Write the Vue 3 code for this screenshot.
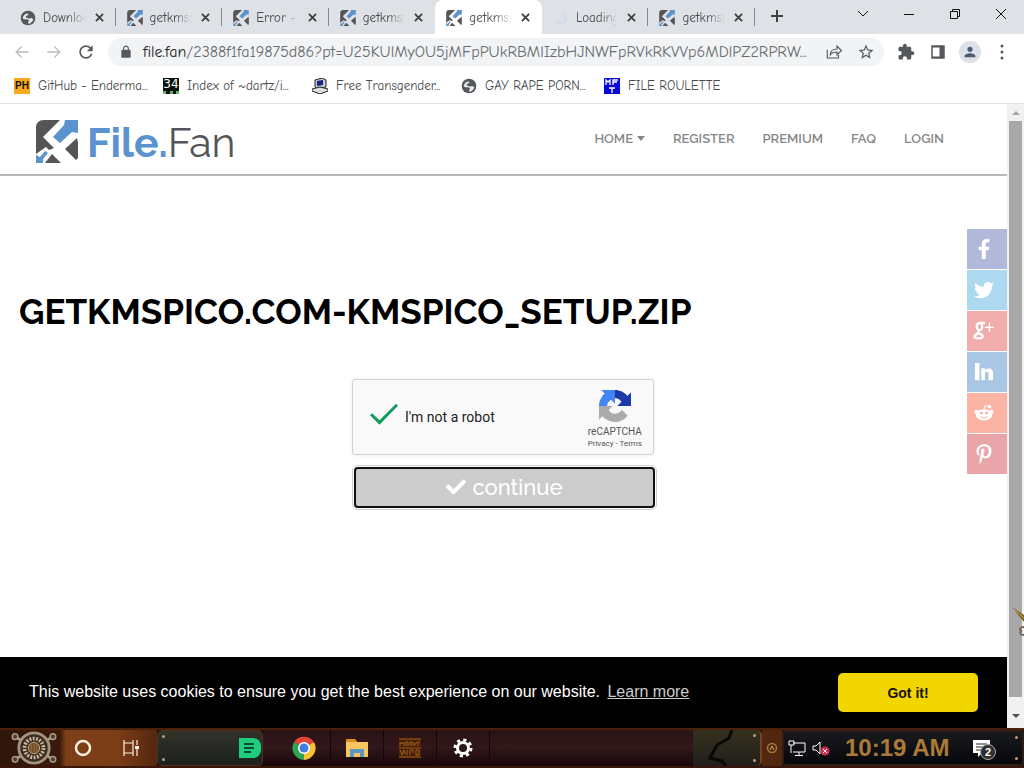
<script setup>
import { ref } from 'vue'

const address = ref('/2388f1fa19875d86?pt=U25KUlMyOU5jMFpPUkRBMlIzbHJNWFpRVkRKVVp6MDlPZ2RPRW...')
const verified = ref(true)

const tabs = [
  { title: 'Downloads', icon: 'globe' },
  { title: 'getkmspico', icon: 'fan' },
  { title: 'Error - File', icon: 'fan' },
  { title: 'getkmspico', icon: 'fan' },
  { title: 'getkmspico', icon: 'fan', active: true },
  { title: 'Loading...', icon: 'spinner' },
  { title: 'getkmspico', icon: 'fan' }
]

const bookmarks = [
  { title: 'GitHub - Enderma...', icon: 'ph', letters: 'PH' },
  { title: 'Index of ~dartz/i...', icon: 'n34', letters: '34' },
  { title: 'Free Transgender...', icon: 'pc' },
  { title: 'GAY RAPE PORN...', icon: 'globe' },
  { title: 'FILE ROULETTE', icon: 'mft' }
]

const nav = ['REGISTER', 'PREMIUM', 'FAQ', 'LOGIN']
const social = ['facebook', 'twitter', 'google', 'linkedin', 'reddit', 'pinterest']
</script>

<template>
  <div class="desktop">
    <svg class="defs" aria-hidden="true">
      <symbol id="fan" viewBox="0 0 42 43">
        <path fill="#555557" d="M0 8Q0 0 8 0H24L7 17L18 28L13 30L10 27L0 34Z M41 18L42 23V38L40 40L29 29Z M16 34L25 43H9Z" />
        <path fill="#5b93cf" d="M28 5L29 0H42V13L36 12L24 23L17 17Z M0 35L4 37L9 31L12 33L7 39V43H0Z" />
      </symbol>
      <symbol id="globe" viewBox="0 0 24 24">
        <circle cx="12" cy="12" r="11" fill="#55585d" />
        <path fill="#e9ebee" d="M4 12c1-4 4-6 7-7l2 3-3 3 3 2 4-1 3 2c-1 4-4 6-7 7l-1-3 2-2-3-2H6z" />
        <path fill="#55585d" d="M8 10l4-3 1 2-3 3z" />
      </symbol>
      <symbol id="spinner" viewBox="0 0 16 16">
        <path d="M9 2a6 6 0 1 1-6 10" fill="none" stroke="#cddcf4" stroke-width="2" />
      </symbol>
      <symbol id="pc" viewBox="0 0 16 16">
        <path d="M3 2l7-2 4 2v7l-8 2-3-2z" fill="#c9c9d4" stroke="#222" />
        <path d="M5 3l6-1v5l-6 1z" fill="#17227a" />
        <path d="M0 11l8-2 8 2v2l-8 3-8-3z" fill="#ddd" stroke="#222" />
      </symbol>
      <symbol id="mft" viewBox="0 0 16 16">
        <rect width="16" height="16" fill="#0a0ad8" />
        <path d="M2 7V2l2 2 2-2v5M9 7V2h5M9 4h4M5 10h6M8 10v5" fill="none" stroke="#fff" stroke-width="1.300" />
      </symbol>
      <symbol id="facebook" viewBox="0 0 320 512">
        <path fill="#fff" d="M279.14 288l14.22-92.66h-88.91v-60.13c0-25.35 12.42-50.06 52.24-50.06h40.42V6.26S260.43 0 225.36 0c-73.22 0-121.08 44.38-121.08 124.72v70.62H22.89V288h81.39v224h100.17V288z" />
      </symbol>
      <symbol id="twitter" viewBox="0 0 512 512">
        <path fill="#fff" d="M459.37 151.716c.325 4.548.325 9.097.325 13.645 0 138.72-105.583 298.558-298.558 298.558-59.452 0-114.68-17.219-161.137-47.106 8.447.974 16.568 1.299 25.34 1.299 49.055 0 94.213-16.568 130.274-44.832-46.132-.975-84.792-31.188-98.112-72.772 6.498.974 12.995 1.624 19.818 1.624 9.421 0 18.843-1.3 27.614-3.573-48.081-9.747-84.143-51.98-84.143-102.985v-1.299c13.969 7.797 30.214 12.67 47.431 13.319-28.264-18.843-46.781-51.005-46.781-87.391 0-19.492 5.197-37.36 14.294-52.954 51.655 63.675 129.3 105.258 216.365 109.807-1.624-7.797-2.599-15.918-2.599-24.04 0-57.828 46.782-104.934 104.934-104.934 30.213 0 57.502 12.67 76.67 33.137 23.715-4.548 46.456-13.32 66.599-25.34-7.798 24.366-24.366 44.833-46.132 57.827 21.117-2.273 41.584-8.122 60.426-16.243-14.292 20.791-32.161 39.308-52.628 54.253z" />
      </symbol>
      <symbol id="google" viewBox="0 0 22 22">
        <g fill="none" stroke="#fff">
          <ellipse cx="6" cy="6" rx="3" ry="4" stroke-width="2.500" />
          <path d="M7 2h5M6 11c-3 1-2 2 0 3 4 1 6 5-1 5s-5-4 0-5" stroke-width="2.500" />
          <path d="M12 7h10M17 2v10" stroke-width="1.500" />
        </g>
      </symbol>
      <symbol id="linkedin" viewBox="0 0 22 22">
        <path fill="#fff" d="M1 1h5v19H1zM8 7h4v2c2-3 9-3 9 3v8h-5v-7c0-3-4-3-4 0v7H8z" />
      </symbol>
      <symbol id="reddit" viewBox="0 0 22 22">
        <g fill="#fff">
          <ellipse cx="11" cy="13" rx="9" ry="6" />
          <circle cx="3" cy="10" r="2.500" />
          <circle cx="19" cy="10" r="2.500" />
          <circle cx="17" cy="4" r="2" />
        </g>
        <path d="M11 8l1-5 4 1" fill="none" stroke="#fff" />
        <g fill="#f4aa9b"><circle cx="8" cy="11" r="1.500" /><circle cx="14" cy="11" r="1.500" /></g>
        <path d="M7 15q4 3 8 0" fill="none" stroke="#f4aa9b" />
      </symbol>
      <symbol id="pinterest" viewBox="0 0 384 512">
        <path fill="#fff" d="M204 6.5C101.4 6.5 0 74.9 0 185.6 0 256 39.6 296 63.6 296c9.9 0 15.6-27.6 15.6-35.4 0-9.3-23.7-29.1-23.7-67.8 0-80.4 61.2-137.4 140.4-137.4 68.1 0 118.5 38.7 118.5 109.8 0 53.1-21.3 152.7-90.3 152.7-24.9 0-46.2-18-46.2-43.8 0-37.8 26.4-74.4 26.4-113.4 0-66.2-93.9-54.2-93.9 25.8 0 16.8 2.1 35.4 9.6 50.7-13.8 59.4-42 147.9-42 209.1 0 18.9 2.7 37.5 4.5 56.4 3.4 3.8 1.7 3.4 6.9 1.5 50.4-69 48.6-82.5 71.4-172.8 12.3 23.4 44.1 36 69.3 36 106.2 0 153.9-103.5 153.9-196.8C384 71.3 298.2 6.500 204 6.500z" />
      </symbol>
    </svg>

    <div class="tabstrip">
      <div class="tabs">
        <div v-for="(tab, i) in tabs" :key="i" class="tab" :class="{ active: tab.active, bare: i === 3 }">
          <svg class="favicon"><use :href="'#' + tab.icon" /></svg>
          <span class="tab-title">{{ tab.title }}</span>
          <button class="tab-close" aria-label="Close tab">
            <svg viewBox="0 0 10 10"><path d="M1 1l8 8M9 1l-8 8" stroke="#3c4043" stroke-width="2" /></svg>
          </button>
        </div>
      </div>
      <button class="new-tab" aria-label="New tab">
        <svg viewBox="0 0 12 12"><path d="M6 0v12M0 6h12" stroke="#3c4043" stroke-width="2" /></svg>
      </button>
      <div class="window-controls">
        <button aria-label="Search tabs"><svg viewBox="0 0 12 12"><path d="M1 3l5 5 5-5" /></svg></button>
        <button aria-label="Minimize"><svg viewBox="0 0 12 12"><path d="M1 6.500h10" /></svg></button>
        <button aria-label="Restore"><svg viewBox="0 0 12 12"><path d="M1.500 3.500h7v7h-7zM3.500 3.500v-2h7v7h-2" /></svg></button>
        <button aria-label="Close"><svg viewBox="0 0 12 12"><path d="M1 1l10 10M11 1L1 11" /></svg></button>
      </div>
    </div>

    <div class="toolbar">
      <button class="tool faded" aria-label="Back"><svg viewBox="0 0 24 24"><path d="M21 11H6.500l5.500-5.500L11 4l-8 8 8 8 1-1.500L6.500 13H21z" /></svg></button>
      <button class="tool faded" aria-label="Forward"><svg viewBox="0 0 24 24"><path d="M3 11h14.500L12 5.500 13 4l8 8-8 8-1-1.500 5.500-5.500H3z" /></svg></button>
      <button class="tool reload" aria-label="Reload"><svg viewBox="0 0 24 24"><path d="M17.650 6.350C16.200 4.900 14.210 4 12 4c-4.420 0-7.990 3.580-7.990 8s3.570 8 7.990 8c3.730 0 6.840-2.550 7.730-6h-2.080c-.82 2.330-3.040 4-5.650 4-3.310 0-6-2.690-6-6s2.690-6 6-6c1.660 0 3.140.69 4.220 1.780L13 11h7V4l-2.350 2.350z" /></svg></button>
      <div class="omnibox">
        <svg class="lock" viewBox="0 0 24 24"><path fill="#55585d" d="M18 8h-1V6c0-2.760-2.240-5-5-5S7 3.240 7 6v2H6c-1.100 0-2 .9-2 2v10c0 1.100.9 2 2 2h12c1.100 0 2-.9 2-2V10c0-1.100-.9-2-2-2zM15.100 8H8.900V6c0-1.710 1.390-3.100 3.100-3.100s3.100 1.390 3.100 3.100v2z" /></svg>
        <label class="host" for="address">file.fan</label>
        <input id="address" v-model="address" class="address" type="text" spellcheck="false">
        <button class="tool" aria-label="Share"><svg viewBox="0 0 24 24"><path d="M3 9v11h15v-4M7 16c0-5 3-8 9-8V4l6 6-6 6v-4c-4 0-7 1-9 4z" fill="none" stroke="#55585d" stroke-width="1.500" /></svg></button>
        <button class="tool" aria-label="Bookmark this page"><svg viewBox="0 0 24 24"><path d="M22 9.240l-7.190-.62L12 2 9.190 8.630 2 9.240l5.460 4.730L5.820 21 12 17.270 18.180 21l-1.630-7.030L22 9.240zM12 15.400l-3.760 2.270 1-4.280-3.320-2.880 4.380-.38L12 6.100l1.710 4.040 4.380.38-3.320 2.880 1 4.280L12 15.400z" /></svg></button>
      </div>
      <button class="tool" aria-label="Extensions"><svg viewBox="0 0 24 24"><path d="M20.500 11H19V7c0-1.100-.9-2-2-2h-4V3.500C13 2.120 11.880 1 10.500 1S8 2.120 8 3.500V5H4c-1.100 0-1.990.9-1.990 2v3.800H3.500c1.490 0 2.700 1.210 2.700 2.700s-1.210 2.700-2.700 2.700H2V20c0 1.100.9 2 2 2h3.800v-1.500c0-1.490 1.210-2.700 2.700-2.700 1.490 0 2.700 1.210 2.700 2.700V22H17c1.100 0 2-.9 2-2v-4h1.500c1.380 0 2.500-1.120 2.500-2.500S21.880 11 20.500 11z" /></svg></button>
      <button class="tool" aria-label="Side panel"><svg viewBox="0 0 24 24"><path d="M3 3h18v18H3zM5 6v12h9V6z" fill-rule="evenodd" /></svg></button>
      <button class="tool avatar" aria-label="Profile"><svg viewBox="0 0 24 24"><path d="M12 12c2.210 0 4-1.790 4-4s-1.790-4-4-4-4 1.790-4 4 1.790 4 4 4zm0 2c-2.670 0-8 1.340-8 4v2h16v-2c0-2.660-5.330-4-8-4z" /></svg></button>
      <button class="tool" aria-label="Menu"><svg viewBox="0 0 24 24"><circle cx="12" cy="4" r="2" /><circle cx="12" cy="12" r="2" /><circle cx="12" cy="20" r="2" /></svg></button>
    </div>

    <nav class="bookmarks" aria-label="Bookmarks">
      <a v-for="mark in bookmarks" :key="mark.title" href="#" class="bookmark">
        <span v-if="mark.letters" class="favicon letters" :class="mark.icon">{{ mark.letters }}</span>
        <svg v-else class="favicon"><use :href="'#' + mark.icon" /></svg>
        <span>{{ mark.title }}</span>
      </a>
    </nav>

    <div class="viewport">
      <div class="page">
        <header class="site-header">
          <a class="brand" href="#">
            <svg class="brand-mark"><use href="#fan" /></svg>
            <span><b>File.</b>Fan</span>
          </a>
          <nav class="site-nav" aria-label="Site">
            <a href="#">HOME<i class="caret"></i></a>
            <a v-for="item in nav" :key="item" href="#">{{ item }}</a>
          </nav>
        </header>

        <main class="content">
          <h1>GETKMSPICO.COM-KMSPICO_SETUP.ZIP</h1>
          <form class="verify" @submit.prevent>
            <div class="captcha">
              <label class="robot">
                <input v-model="verified" type="checkbox">
                <span>I'm not a robot</span>
              </label>
              <div class="captcha-brand">
                <svg viewBox="0 0 64 64">
                  <path d="M64 31.955l-.033-1.370V4.687l-7.160 7.160C50.948 4.674 42.033.093 32.050.093c-10.400 0-19.622 4.960-25.458 12.640l11.736 11.860a15.550 15.550 0 0 1 4.754-5.334c2.050-1.600 4.952-2.906 8.968-2.906.485 0 .86.057 1.135.163 4.976.393 9.288 3.140 11.828 7.124l-8.307 8.307L64 31.953" fill="#1c3aa9" />
                  <path d="M31.862.094l-1.370.033H4.594l7.160 7.160C4.580 13.147 0 22.060 0 32.046c0 10.400 4.960 19.622 12.640 25.458L24.500 45.768a15.550 15.550 0 0 1-5.334-4.754c-1.600-2.050-2.906-4.952-2.906-8.968 0-.485.057-.86.163-1.135.393-4.976 3.140-9.288 7.124-11.828l8.307 8.307L31.860.095" fill="#4285f4" />
                  <path d="M.001 32.045l.033 1.370v25.898l7.160-7.160c5.860 7.173 14.774 11.754 24.760 11.754 10.400 0 19.622-4.960 25.458-12.640l-11.736-11.860a15.550 15.550 0 0 1-4.754 5.334c-2.050 1.600-4.952 2.906-8.968 2.906-.485 0-.86-.057-1.135-.163-4.976-.393-9.288-3.140-11.828-7.124l8.307-8.307c-10.522.04-22.400.066-27.295-.005" fill="#ababab" />
                </svg>
                <div class="captcha-name">reCAPTCHA</div>
                <div class="captcha-links"><a href="#">Privacy</a> - <a href="#">Terms</a></div>
              </div>
            </div>
            <button class="continue" type="submit">
              <svg viewBox="0 0 512 512"><path fill="#fff" d="M173.898 439.404l-166.400-166.400c-9.997-9.997-9.997-26.206 0-36.204l36.203-36.204c9.997-9.998 26.207-9.998 36.204 0L192 312.690 432.095 72.596c9.997-9.997 26.207-9.997 36.204 0l36.203 36.204c9.997 9.997 9.997 26.206 0 36.204l-294.400 294.401c-9.998 9.997-26.207 9.997-36.204-.001z" /></svg>
              continue
            </button>
          </form>
        </main>

        <div class="social">
          <a v-for="name in social" :key="name" href="#" :class="name" :aria-label="name">
            <svg><use :href="'#' + name" /></svg>
          </a>
        </div>

        <div class="cookies">
          <p>This website uses cookies to ensure you get the best experience on our website. <a href="#">Learn more</a></p>
          <button>Got it!</button>
        </div>
      </div>

      <div class="scrollbar">
        <svg class="arrow" viewBox="0 0 17 17"><path d="M5 11l4-4 4 4z" fill="#a3a3a3" /></svg>
        <div class="thumb"></div>
        <svg class="arrow low" viewBox="0 0 17 17"><path d="M5 10l4 4 4-4z" fill="#505050" /></svg>
        <svg class="cursor" viewBox="0 0 12 32">
          <path d="M0 1l12 8v7z" fill="#75601e" />
          <path d="M2 3l10 9" stroke="#c9aa50" />
          <path d="M12 21c-5 0-5 4-2 4-3 1-2 4 2 4" fill="none" stroke="#75665a" stroke-width="2" />
        </svg>
      </div>
    </div>

    <footer class="taskbar">
      <div class="launch">
        <button class="start" aria-label="Start">
          <svg viewBox="0 0 52 38">
            <g fill="#4b4033" stroke="#a89b83" stroke-width="1.500">
              <path d="M6 7l10 6M46 7l-10 6M6 31l10-6M46 31l-10-6" stroke-width="3" />
              <circle cx="6" cy="7" r="3" /><circle cx="46" cy="7" r="3" /><circle cx="6" cy="31" r="3" /><circle cx="46" cy="31" r="3" />
            </g>
            <circle cx="26" cy="19" r="16" fill="#3a2c20" stroke="#a1947e" stroke-width="3" />
            <circle cx="26" cy="19" r="10" fill="none" stroke="#c6b99d" stroke-width="4" stroke-dasharray="2 1.500" />
            <circle cx="26" cy="19" r="6" fill="#6b4b2c" stroke="#c1ad86" />
            <path d="M26 14v10M23 15v8M29 15v8" stroke="#a8722f" />
          </svg>
        </button>
        <button aria-label="Search"><svg class="i20" viewBox="0 0 20 20"><circle cx="10" cy="10" r="7" fill="none" stroke="#fff1dc" stroke-width="2.500" /></svg></button>
        <button aria-label="Task view"><svg class="i20" viewBox="0 0 20 20"><path d="M3 2v3h9V2M3 18v-3h9v3M3 5h9v10H3zM16 2v5M16 11v7" fill="none" stroke="#fff1dc" stroke-width="1.200" /><path d="M14 8h4v3h-4z" fill="#fff1dc" /></svg></button>
      </div>
      <div class="plate">
        <i class="rivet"></i><i class="rivet"></i>
        <svg class="note" viewBox="0 0 22 20"><path d="M0 0h14a8 8 0 0 1 8 8v4a8 8 0 0 1-8 8H0z" fill="#1fce7d" /><path d="M5 6h10M5 10h10M5 14h7" stroke="#104a31" stroke-width="2" /></svg>
      </div>
      <div class="apps">
        <button aria-label="Chrome">
          <svg class="i24" viewBox="0 0 24 24">
            <path d="M12 12L2 6A12 12 0 0 1 22 6z" fill="#e24537" />
            <path d="M12 12L22 6A12 12 0 0 1 12 24z" fill="#f6c234" />
            <path d="M12 12V24A12 12 0 0 1 2 6z" fill="#32a352" />
            <path d="M12 6h10v1H12z" fill="#e24537" />
            <circle cx="12" cy="12" r="6" fill="#fff" /><circle cx="12" cy="12" r="4.500" fill="#3f7de0" />
          </svg>
        </button>
        <button aria-label="File Explorer"><svg class="i24" viewBox="0 0 24 24"><path d="M1 3h9l2 3h11v15H1z" fill="#f8c660" /><path d="M1 3h9l2 3H1z" fill="#dc8c1e" /><path d="M5 21v-8h14v8h-4v-4H9v4z" fill="#5d95c4" /></svg></button>
        <button aria-label="Market wire"><svg class="i24" viewBox="0 0 24 24"><path d="M1 2h22v20H1z" fill="#442009" /><path d="M1 3h22M1 12h22M1 21h22" stroke="#ad5711" /><path d="M2 10V6l2 2 2-2v4M8 10V6h2v4M12 10V6h2v4M16 6v4l3-4M20 10V6h2M2 14l2 5 2-5 1 4M9 14v5M12 19v-5h3v3M18 14v5h3v-5z" fill="none" stroke="#a66117" /></svg></button>
        <button aria-label="Settings"><svg class="i20" viewBox="0 0 20 20"><circle cx="10" cy="10" r="8" fill="none" stroke="#fff" stroke-width="3" stroke-dasharray="3.140 3.140" /><circle cx="10" cy="10" r="5.500" fill="none" stroke="#fff" stroke-width="3" /></svg></button>
      </div>
      <div class="cracked">
        <svg viewBox="0 0 52 36"><path d="M39 0l-3 8-12 7-7 13 12 3 4 5" fill="none" stroke="#080706" stroke-width="3" /></svg>
        <i class="rivet"></i><i class="rivet"></i>
      </div>
      <div class="joint"><svg viewBox="0 0 12 12"><circle cx="6" cy="6" r="4.500" fill="#4d2810" stroke="#a67738" stroke-width="1.500" /><path d="M4 8l2-4 2 4" fill="none" stroke="#d6aa60" /></svg></div>
      <div class="tray">
        <svg class="i20" viewBox="0 0 20 20"><path d="M6 5h12v9H6M12 14v3M8 17.500h8M2 3h5v4H2zM4 7v8" fill="none" stroke="#fff" /></svg>
        <svg class="i20" viewBox="0 0 20 20"><path d="M2 8h3l4-4v12l-4-4H2z" fill="none" stroke="#fff" /><circle cx="14" cy="13" r="4.500" fill="#d22950" /><path d="M12 11l4 4M16 11l-4 4" stroke="#fff" /></svg>
        <time>10:19 AM</time>
        <button class="notices" aria-label="Notifications">
          <svg viewBox="0 0 20 20"><path d="M1 2h17v13h-8l-4 4v-4H1z" fill="#fff" /><path d="M4 6h11M4 9h11M4 12h7" stroke="#222" /></svg>
          <span class="badge">2</span>
        </button>
        <i class="rivet"></i><i class="rivet"></i>
      </div>
    </footer>
  </div>
</template>

<style>
body { margin: 0; }
</style>

<style scoped>
* { box-sizing: border-box; }
button, input { font: inherit; margin: 0; padding: 0; border: 0; background: none; color: inherit; }
a { color: inherit; text-decoration: none; }
.defs { position: absolute; width: 0; height: 0; }
.desktop {
  display: flex;
  flex-direction: column;
  min-height: 100vh;
  background: #fff;
  font-family: "Comic Sans MS", "Comic Neue", Lato, sans-serif;
}

.tabstrip { display: flex; height: 34px; background: #dee1e6; }
.tabs { display: flex; flex: 0 1 755px; min-width: 0; padding-left: 9px; }
.tab { position: relative; display: flex; flex: 1 1 0; min-width: 0; align-items: center; gap: 7px; padding: 1px 12px 0 11px; color: #45484c; font-size: 13px; font-weight: 500; }
.tab::after { content: ""; position: absolute; right: 0; top: 8px; width: 1px; height: 18px; background: #85888d; }
.tab.active::after, .tab.bare::after { display: none; }
.tab.active { background: #fff; border-radius: 8px 8px 0 0; }
.favicon { flex: none; width: 16px; height: 16px; }
.letters { overflow: hidden; font: 700 10px/16px "Liberation Sans", sans-serif; text-align: center; }
.letters.ph { background: #f7a81b; color: #111; }
.letters.n34 { border-bottom: 3px dotted #62b36a; background: #0b140c; color: #fff; font: 12px/12px "DejaVu Sans", sans-serif; }
.tab-title { flex: 1; min-width: 0; overflow: hidden; white-space: nowrap; mask-image: linear-gradient(90deg, #000 55%, transparent 95%); }
.tab-close { flex: none; display: flex; }
.tab-close svg { width: 9px; height: 9px; }
.new-tab { width: 44px; }
.new-tab svg { width: 12px; height: 12px; }
.window-controls { display: flex; margin-left: auto; }
.window-controls button { width: 46px; height: 30px; }
.window-controls svg { width: 12px; height: 12px; fill: none; stroke: #111; }

.toolbar { display: flex; align-items: center; height: 36px; padding: 0 6px; }
.tool { display: flex; flex: none; align-items: center; justify-content: center; width: 32px; height: 28px; }
.tool svg { width: 18px; height: 18px; fill: #55585d; }
.tool.faded svg { fill: #b9bbbe; }
.tool.reload svg { width: 20px; height: 20px; }
.tool.avatar { width: 22px; height: 22px; margin: 0 5px; border-radius: 50%; background: #dce0e8; }
.tool.avatar svg { width: 16px; height: 16px; fill: #4c5c70; }
.omnibox { display: flex; flex: 1; align-items: center; height: 28px; margin: 0 6px; padding: 0 2px 0 11px; border-radius: 14px; background: #f1f3f4; font-size: 16px; }
.lock { flex: none; width: 14px; height: 14px; margin-right: 10px; }
.host { color: #202124; }
.address { flex: 1; min-width: 0; color: #686b70; outline: 0; text-overflow: ellipsis; }

.bookmarks { display: flex; height: 34px; padding: 0 14px 2px; align-items: center; border-bottom: 1px solid #dcdee0; color: #45484c; font-size: 13px; }
.bookmark { display: flex; align-items: center; gap: 8px; width: 149px; height: 30px; white-space: nowrap; }
.bookmark:nth-child(4) { width: 143px; }

.viewport { display: flex; flex: 1; }
.page { position: relative; display: flex; flex: 1; flex-direction: column; min-width: 0; }
.site-header { display: flex; align-items: center; justify-content: space-between; height: 72px; padding: 0 63px 0 36px; border-bottom: 2px solid #b9b7b7; }
.brand { display: flex; align-items: center; gap: 9px; padding-top: 4px; color: #555557; font-family: Raleway, Lato, sans-serif; font-size: 41px; font-weight: 400; line-height: 52px; }
.brand b { color: #5b93cf; font-weight: 700; }
.brand span { padding-top: 3px; }
.brand-mark { width: 42px; height: 43px; }
.site-nav { display: flex; gap: 28px; padding-bottom: 2px; color: #888; font-family: Raleway, "Open Sans", sans-serif; font-size: 13px; font-weight: 600; }
.site-nav a { display: flex; align-items: center; gap: 4px; }
.caret { border: 4px solid transparent; border-top: 5px solid #888; border-bottom: 0; }
.content { flex: 1; padding: 114px 19px 0; }
h1 { margin: 0; font: 700 35px/44px Raleway, "Open Sans", sans-serif; color: #000; }
.verify { display: flex; flex-direction: column; width: 303px; gap: 12px; margin: 45px auto 0; }
.captcha { display: flex; justify-content: space-between; width: 302px; height: 76px; padding: 0 11px 0 17px; border: 1px solid #d3d3d3; border-radius: 3px; background: #f9f9f9; box-shadow: 0 0 4px rgba(0, 0, 0, .08); font-family: Roboto, sans-serif; }
.robot { display: flex; align-items: center; gap: 7px; color: #222; font-size: 14px; }
.robot input { appearance: none; width: 28px; height: 28px; }
.robot input:checked { background: #109d5c; clip-path: polygon(0 44%, 7% 37%, 34% 62%, 93% 3%, 100% 10%, 34% 78%); }
.captcha-brand { display: flex; flex-direction: column; align-items: center; padding-top: 10px; color: #555; }
.captcha-brand svg { width: 32px; height: 32px; }
.captcha-name { margin-top: 3px; font-size: 10px; line-height: 14px; }
.captcha-links { font-size: 8px; line-height: 10px; }
.continue { display: flex; align-items: center; justify-content: center; gap: 6px; height: 41px; margin-left: 2px; padding-bottom: 2px; border: 2px solid #101010; border-radius: 4px; outline: 1px solid #ccc; outline-offset: 1px; background: #ccc; color: #fff; font: 500 22px/28px Raleway, "Open Sans", sans-serif; }
.continue svg { width: 20px; height: 20px; }

.social { position: absolute; top: 125px; right: 0; display: grid; gap: 1px; }
.social a { display: flex; align-items: center; width: 40px; height: 40px; padding-left: 6px; }
.social svg { width: 22px; height: 20px; }
.facebook { background: #b0b9d9; }
.twitter { background: #add9f0; }
.google { background: #f1adab; }
.linkedin { background: #a9c7e5; }
.reddit { background: #fbb4a3; }
.pinterest { background: #e9a5a9; }

.cookies { display: flex; align-items: center; justify-content: space-between; min-height: 71px; padding: 0 29px; background: #000; color: #fff; font: 16px/24px "Liberation Sans", Arial, sans-serif; }
.cookies p { margin: 0; padding-bottom: 2px; }
.cookies a { margin-left: 3px; color: #ccc; text-decoration: underline; }
.cookies button { width: 140px; height: 39px; border-radius: 5px; background: #f1d600; color: #1a1000; font-size: 14px; font-weight: 700; }

.scrollbar { position: relative; display: flex; flex: none; flex-direction: column; width: 17px; background: #f1f1f1; }
.arrow { width: 17px; height: 17px; }
.arrow.low { height: 31px; }
.thumb { flex: 1; margin: 0 2px; background: #a8a8a8; }
.cursor { position: absolute; right: 0; bottom: 90px; width: 12px; height: 32px; }

.taskbar { display: flex; height: 40px; border-top: 2px solid #4b210e; border-bottom: 2px solid #3a150a; background: #1c0c0b; }
.taskbar button { display: flex; align-items: center; justify-content: center; }
.i20 { flex: none; width: 20px; height: 20px; }
.i24 { flex: none; width: 24px; height: 24px; }
.launch { display: flex; width: 157px; background: linear-gradient(90deg, #30150a, #3c1a0b 38%, #7c3f17 42%, #7a3d16 75%, #54270f); }
.launch button { width: 48px; }
.launch .start { width: 59px; padding-left: 9px; }
.start svg { width: 50px; height: 36px; }
.plate { position: relative; display: flex; align-items: center; justify-content: flex-end; width: 106px; padding-right: 1px; border: 1px solid #4e3219; border-radius: 5px; background: linear-gradient(#33322b, #1c211f); }
.note { width: 22px; height: 20px; }
.rivet { position: absolute; left: 4px; top: 4px; width: 3px; height: 3px; border-radius: 50%; background: #c09c80; }
.rivet + .rivet { top: auto; bottom: 4px; }
.apps { display: flex; flex: 1; padding-left: 15px; background: linear-gradient(#2b1214, #311719 50%, #170709); }
.apps button { width: 53px; border-right: 1px solid #160607; }
.cracked { position: relative; width: 69px; border-radius: 0 5px 5px 0; border-right: 2px solid #72431c; background: linear-gradient(#36301f, #211f1b); }
.cracked svg { width: 52px; height: 36px; }
.cracked .rivet, .tray .rivet { left: auto; right: 4px; }
.joint { display: flex; align-items: center; justify-content: center; width: 20px; background: #51270f; }
.joint svg { width: 12px; height: 12px; }
.tray { position: relative; display: flex; align-items: center; width: 242px; padding-left: 3px; gap: 4px; border: 2px solid #2e1c16; border-radius: 4px; background: linear-gradient(#191a1d, #07080b); }
.tray time { flex: 1; padding-left: 10px; color: #ac7a38; font: 700 24px/32px "Liberation Sans", Arial, sans-serif; white-space: nowrap; }
.notices { position: relative; margin-right: 30px; }
.notices svg { width: 20px; height: 20px; }
.badge { position: absolute; left: 8px; top: 6px; width: 16px; height: 16px; border: 1px solid #aaa; border-radius: 50%; background: #303030; color: #fff; font: 700 11px/14px "Liberation Sans", sans-serif; text-align: center; }
</style>
